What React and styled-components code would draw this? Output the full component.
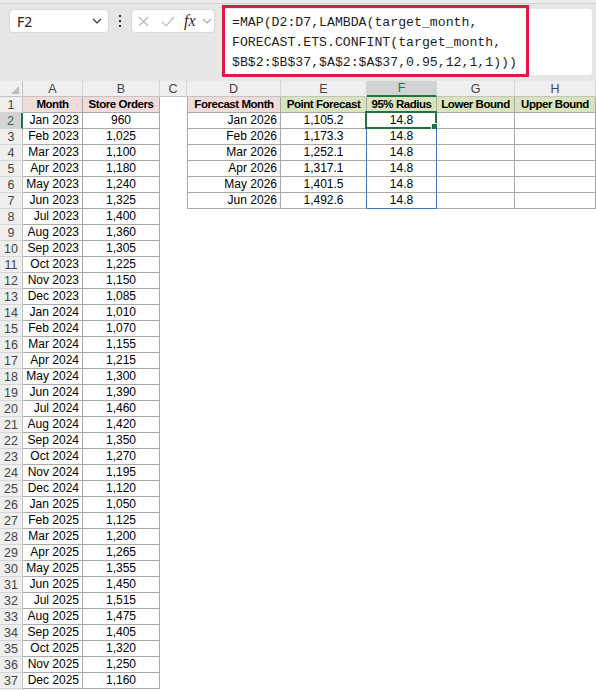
import React from "react";
import styled, { createGlobalStyle, css } from "styled-components";

const LINE = "#a9a9a9";
const SPILL = "#3a78c2";
const EXCEL_GREEN = "#217346";

const MONTHS = ["Jan", "Feb", "Mar", "Apr", "May", "Jun", "Jul", "Aug", "Sep", "Oct", "Nov", "Dec"];

const ORDERS = [
  960, 1025, 1100, 1180, 1240, 1325, 1400, 1360, 1305, 1225, 1150, 1085,
  1010, 1070, 1155, 1215, 1300, 1390, 1460, 1420, 1350, 1270, 1195, 1120,
  1050, 1125, 1200, 1265, 1355, 1450, 1515, 1475, 1405, 1320, 1250, 1160,
];

const history = ORDERS.map((orders, i) => ({
  month: `${MONTHS[i % 12]} ${2023 + Math.floor(i / 12)}`,
  orders: orders.toLocaleString("en-US"),
}));

const forecast = [
  { month: "Jan 2026", point: "1,105.2", radius: "14.8" },
  { month: "Feb 2026", point: "1,173.3", radius: "14.8" },
  { month: "Mar 2026", point: "1,252.1", radius: "14.8" },
  { month: "Apr 2026", point: "1,317.1", radius: "14.8" },
  { month: "May 2026", point: "1,401.5", radius: "14.8" },
  { month: "Jun 2026", point: "1,492.6", radius: "14.8" },
];

const COLUMNS = ["A", "B", "C", "D", "E", "F", "G", "H"];

const FORMULA = `=MAP(D2:D7,LAMBDA(target_month,
FORECAST.ETS.CONFINT(target_month,
$B$2:$B$37,$A$2:$A$37,0.95,12,1,1)))`;

const GlobalStyle = createGlobalStyle`
  html, body {
    margin: 0;
    padding: 0;
    background: #e6e6e6;
    overflow: hidden;
  }
  * {
    box-sizing: border-box;
  }
`;

const Page = styled.div`
  width: 596px;
  height: 690px;
  overflow: hidden;
  background: #e6e6e6;
`;

const TopStrip = styled.div`
  height: 4px;
  background: #ededed;
  border-bottom: 1px solid #d3d3d3;
`;

const FormulaBar = styled.div`
  display: flex;
  align-items: flex-start;
  height: 77px;
  padding-left: 9px;
`;

const NameBox = styled.div`
  display: flex;
  align-items: center;
  justify-content: space-between;
  width: 100px;
  height: 24px;
  margin-top: 5px;
  padding: 0 6px 0 7px;
  background: #fff;
  border: 1px solid #dadada;
  border-radius: 4px;
  font-family: "Noto Sans", sans-serif;
  font-size: 14px;
  color: #222;
`;

const Kebab = styled.div`
  display: flex;
  align-items: center;
  justify-content: center;
  width: 22px;
  height: 24px;
  margin-top: 5px;
`;

const ActionBox = styled.div`
  display: flex;
  align-items: center;
  width: 84px;
  height: 24px;
  margin-top: 5px;
  padding-left: 6px;
  background: #fff;
  border: 1px solid #dadada;
  border-radius: 4px;
`;

const ActionIcon = styled.svg`
  flex: none;
  margin-left: ${(p) => p.$gap || 0}px;
`;

const Fx = styled.span`
  margin-left: 9px;
  font-family: "Liberation Serif", serif;
  font-style: italic;
  font-size: 16px;
  line-height: 1;
  color: #2b2b2b;
`;

const FormulaInput = styled.div`
  position: relative;
  width: 370px;
  height: 66px;
  margin: 5px 0 0 7px;
  background: #fff;
  border-radius: 3px;
`;

const Highlight = styled.div`
  position: absolute;
  top: -4px;
  left: 0;
  width: 307px;
  height: 72px;
  border: 3px solid #e3174a;
  pointer-events: none;
`;

const FormulaText = styled.pre`
  margin: 0;
  padding: 4px 0 0 10px;
  font-family: "Liberation Mono", "DejaVu Sans Mono", monospace;
  font-size: 13.2px;
  line-height: 20px;
  color: #1e1e1e;
`;

const Sheet = styled.div`
  display: grid;
  grid-template-columns: 23px 60px 77px 27px 94px 86px 70px 78px 81px;
  grid-auto-rows: 16px;
  background: #fff;
  font-family: "Liberation Sans", Arial, sans-serif;
`;

const headerBase = css`
  display: flex;
  align-items: center;
  justify-content: center;
  background: #efefef;
  font-size: 12.5px;
  color: #444;
`;

const Corner = styled.div`
  ${headerBase};
  justify-content: flex-end;
  align-items: flex-end;
  padding: 0 3px 2px 0;
  border-right: 1px solid #c3c3c3;
  border-bottom: 1px solid #c3c3c3;
`;

const ColHead = styled.div`
  ${headerBase};
  border-right: 1px solid #d6d6d6;
  border-bottom: 1px solid #c3c3c3;
  ${(p) =>
    p.$active &&
    css`
      background: #d3d3d3;
      color: ${EXCEL_GREEN};
      border-bottom: 2px solid ${EXCEL_GREEN};
    `}
`;

const RowHead = styled.div`
  ${headerBase};
  border-right: 1px solid #c3c3c3;
  border-bottom: 1px solid #d6d6d6;
  ${(p) =>
    p.$active &&
    css`
      background: #d3d3d3;
      color: ${EXCEL_GREEN};
      border-right: 2px solid ${EXCEL_GREEN};
    `}
`;

const edge = (color) => (color ? `1px solid ${color}` : "none");

const Cell = styled.div`
  position: relative;
  padding: 0 3px;
  font-size: 12px;
  line-height: 15px;
  color: #000;
  white-space: nowrap;
  text-align: ${(p) => p.$align || "left"};
  background: ${(p) => p.$fill || "#fff"};
  border-left: ${(p) => edge(p.$left)};
  border-right: ${(p) => edge(p.$right)};
  border-bottom: ${(p) => edge(p.$bottom)};
  ${(p) =>
    p.$bold &&
    css`
      padding: 0 1px;
      font-size: 11.5px;
      font-weight: 700;
      letter-spacing: -0.45px;
    `}
`;

const ActiveFrame = styled.div`
  position: absolute;
  top: -2px;
  left: -2px;
  right: -1px;
  bottom: -1px;
  border: 2px solid ${EXCEL_GREEN};
  pointer-events: none;

  &::after {
    content: "";
    position: absolute;
    right: -4px;
    bottom: -4px;
    width: 6px;
    height: 6px;
    background: ${EXCEL_GREEN};
    border: 1px solid #fff;
  }
`;

const PINK = "#f2dcdb";
const GREEN = "#d8e4bc";

const Chevron = ({ color = "#333", gap }) => (
  <ActionIcon $gap={gap} width="10" height="6" viewBox="0 0 10 6">
    <path d="M1 1l4 4 4-4" fill="none" stroke={color} strokeWidth="1.2" />
  </ActionIcon>
);

const HeaderRow = () => (
  <>
    <Corner>
      <svg width="8" height="8" viewBox="0 0 8 8">
        <polygon points="8,0 8,8 0,8" fill="#bdbdbd" />
      </svg>
    </Corner>
    {COLUMNS.map((c) => (
      <ColHead key={c} $active={c === "F"}>
        {c}
      </ColHead>
    ))}
  </>
);

const TitleRow = () => (
  <>
    <RowHead>1</RowHead>
    <Cell $bold $align="center" $fill={PINK} $right={LINE} $bottom={LINE}>Month</Cell>
    <Cell $bold $align="center" $fill={PINK} $right={LINE} $bottom={LINE}>Store Orders</Cell>
    <Cell />
    <Cell $bold $align="center" $fill={PINK} $left={LINE} $right={LINE} $bottom={LINE}>Forecast Month</Cell>
    <Cell $bold $align="center" $fill={GREEN} $right={LINE} $bottom={LINE}>Point Forecast</Cell>
    <Cell $bold $align="center" $fill={GREEN} $right={LINE} $bottom={LINE}>95% Radius</Cell>
    <Cell $bold $align="center" $fill={GREEN} $right={LINE} $bottom={LINE}>Lower Bound</Cell>
    <Cell $bold $align="center" $fill={GREEN} $right={LINE} $bottom={LINE}>Upper Bound</Cell>
  </>
);

const DataRow = ({ row, item, fc, last }) => (
  <>
    <RowHead $active={row === 2}>{row}</RowHead>
    <Cell $align="right" $right={LINE} $bottom={LINE}>{item.month}</Cell>
    <Cell $align="center" $right={LINE} $bottom={LINE}>{item.orders}</Cell>
    <Cell />
    {fc ? (
      <>
        <Cell $align="right" $left={LINE} $right={LINE} $bottom={LINE}>{fc.month}</Cell>
        <Cell $align="center" $right={SPILL} $bottom={LINE}>{fc.point}</Cell>
        <Cell $align="center" $right={SPILL} $bottom={last ? SPILL : LINE}>
          {fc.radius}
          {row === 2 && <ActiveFrame />}
        </Cell>
        <Cell $right={LINE} $bottom={LINE} />
        <Cell $right={LINE} $bottom={LINE} />
      </>
    ) : (
      <>
        <Cell />
        <Cell />
        <Cell />
        <Cell />
        <Cell />
      </>
    )}
  </>
);

export default function App() {
  return (
    <Page>
      <GlobalStyle />
      <TopStrip />
      <FormulaBar>
        <NameBox>
          F2
          <Chevron />
        </NameBox>
        <Kebab>
          <svg width="4" height="14" viewBox="0 0 4 14">
            <rect x="1" y="1" width="2" height="2" fill="#333" />
            <rect x="1" y="6" width="2" height="2" fill="#333" />
            <rect x="1" y="11" width="2" height="2" fill="#333" />
          </svg>
        </Kebab>
        <ActionBox>
          <ActionIcon width="11" height="11" viewBox="0 0 11 11">
            <path d="M1 1l9 9M10 1l-9 9" stroke="#b9b9b9" strokeWidth="1.2" />
          </ActionIcon>
          <ActionIcon $gap={12} width="14" height="11" viewBox="0 0 14 11">
            <path d="M1 6l4 4 8-9" fill="none" stroke="#b9b9b9" strokeWidth="1.2" />
          </ActionIcon>
          <Fx>fx</Fx>
          <Chevron color="#a8a8a8" gap={6} />
        </ActionBox>
        <FormulaInput>
          <Highlight />
          <FormulaText>{FORMULA}</FormulaText>
        </FormulaInput>
      </FormulaBar>
      <Sheet>
        <HeaderRow />
        <TitleRow />
        {history.map((item, i) => (
          <DataRow
            key={item.month}
            row={i + 2}
            item={item}
            fc={forecast[i]}
            last={i === forecast.length - 1}
          />
        ))}
        <RowHead />
      </Sheet>
    </Page>
  );
}
